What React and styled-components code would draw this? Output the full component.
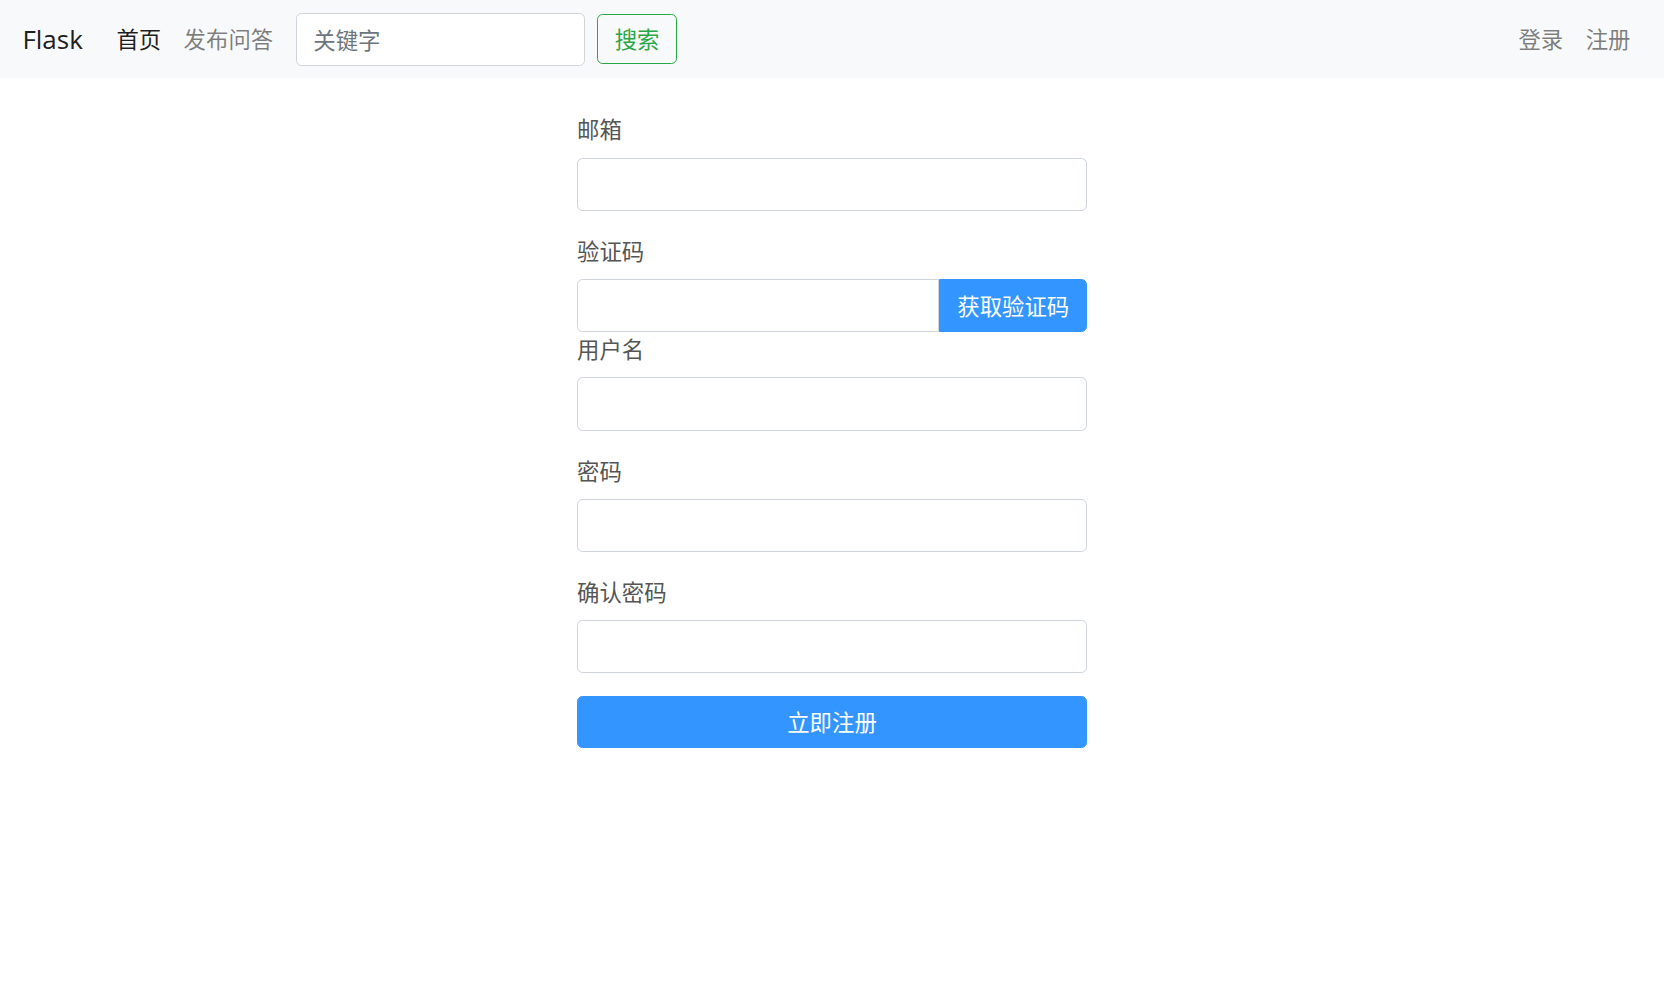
import React, { useState } from "react";
import styled, { createGlobalStyle } from "styled-components";

const GlobalStyle = createGlobalStyle`
  html, body {
    margin: 0;
    padding: 0;
    background: #fff;
  }
  body {
    font-family: "Segoe UI", "Noto Sans", "Noto Sans CJK SC", sans-serif;
    font-size: 22.4px;
    line-height: 1.5;
    color: #212529;
  }
  * {
    box-sizing: border-box;
  }
`;

const Page = styled.div`
  margin-right: 3px;
`;

const Navbar = styled.nav`
  display: flex;
  align-items: center;
  height: 78.4px;
  padding: 11.2px 22.4px;
  background: #f8f9fa;
`;

const Brand = styled.a`
  font-size: 26px;
  line-height: 42px;
  padding: 7px 0;
  margin-right: 22.4px;
  color: rgba(0, 0, 0, 0.9);
  text-decoration: none;
  font-family: "Segoe UI", "Open Sans", sans-serif;
`;

const NavList = styled.ul`
  display: flex;
  list-style: none;
  margin: 0;
  padding: 0;
`;

const NavLink = styled.a`
  display: block;
  padding: 11.2px;
  color: ${(p) => (p.active ? "rgba(0, 0, 0, 0.9)" : "rgba(0, 0, 0, 0.5)")};
  text-decoration: none;
  font-family: "Noto Sans CJK SC", sans-serif;
  font-size: 22.4px;
  line-height: 33.6px;
`;

const SearchForm = styled.form`
  display: flex;
  align-items: center;
  margin-left: 11.2px;
  margin-right: auto;
`;

const SearchInput = styled.input`
  width: 289px;
  height: 53.2px;
  padding: 8.4px 16.8px;
  border: 1.4px solid #ced4da;
  border-radius: 5.6px;
  font-family: "Noto Sans CJK SC", sans-serif;
  font-size: 22.4px;
  color: #495057;
  background: #fff;
  margin-right: 12.8px;
  outline: none;
  &::placeholder {
    color: #6c757d;
  }
`;

const OutlineButton = styled.button`
  height: 50px;
  padding: 0 16.4px;
  border: 1.4px solid #28a745;
  border-radius: 5.6px;
  background: transparent;
  color: #28a745;
  font-family: "Noto Sans CJK SC", sans-serif;
  font-size: 22.4px;
  line-height: 33.6px;
  cursor: pointer;
`;

const Container = styled.div`
  width: 510px;
  margin: 34px auto 0;
`;

const FormGroup = styled.div`
  margin-bottom: ${(p) => (p.flush ? "0" : "23px")};
`;

const Label = styled.label`
  display: block;
  margin-bottom: 11.6px;
  color: #555;
  font-family: "Noto Sans CJK SC", sans-serif;
  font-size: 22.4px;
  line-height: 33.6px;
`;

const Input = styled.input`
  display: block;
  width: 100%;
  height: 53.2px;
  padding: 8.4px 16.8px;
  border: 1.4px solid #ced4da;
  border-radius: 5.6px;
  font-size: 22.4px;
  color: #495057;
  background: #fff;
  outline: none;
`;

const InputGroup = styled.div`
  display: flex;
  align-items: stretch;
  ${Input} {
    flex: 1;
    width: auto;
    border-top-right-radius: 0;
    border-bottom-right-radius: 0;
  }
`;

const PrimaryButton = styled.button`
  display: block;
  width: ${(p) => (p.block ? "100%" : "auto")};
  height: ${(p) => (p.block ? "52px" : "53.2px")};
  margin-top: ${(p) => (p.block ? "1.5px" : "0")};
  padding: 0 16.8px;
  border: 1.4px solid #3395ff;
  border-radius: ${(p) => (p.attached ? "0 5.6px 5.6px 0" : "5.6px")};
  background: #3395ff;
  color: #fff;
  font-family: "Noto Sans CJK SC", sans-serif;
  font-size: 22.4px;
  line-height: 33.6px;
  cursor: pointer;
`;

const fields = [
  { name: "username", label: "用户名", type: "text" },
  { name: "password", label: "密码", type: "password" },
  { name: "password_confirm", label: "确认密码", type: "password" },
];

const App = () => {
  const [form, setForm] = useState({
    email: "",
    captcha: "",
    username: "",
    password: "",
    password_confirm: "",
  });

  const handleChange = (e) => {
    setForm({ ...form, [e.target.name]: e.target.value });
  };

  return (
    <Page>
      <GlobalStyle />
      <Navbar>
        <Brand href="#">Flask</Brand>
        <NavList>
          <li>
            <NavLink href="#" active>首页</NavLink>
          </li>
          <li>
            <NavLink href="#">发布问答</NavLink>
          </li>
        </NavList>
        <SearchForm onSubmit={(e) => e.preventDefault()}>
          <SearchInput type="search" placeholder="关键字" />
          <OutlineButton type="submit">搜索</OutlineButton>
        </SearchForm>
        <NavList>
          <li>
            <NavLink href="#">登录</NavLink>
          </li>
          <li>
            <NavLink href="#">注册</NavLink>
          </li>
        </NavList>
      </Navbar>

      <Container>
        <form onSubmit={(e) => e.preventDefault()}>
          <FormGroup>
            <Label htmlFor="email">邮箱</Label>
            <Input
              type="email"
              id="email"
              name="email"
              value={form.email}
              onChange={handleChange}
            />
          </FormGroup>
          <FormGroup flush>
            <Label htmlFor="captcha">验证码</Label>
            <InputGroup>
              <Input
                type="text"
                id="captcha"
                name="captcha"
                value={form.captcha}
                onChange={handleChange}
              />
              <PrimaryButton type="button" attached>
                获取验证码
              </PrimaryButton>
            </InputGroup>
          </FormGroup>
          {fields.map((f) => (
            <FormGroup key={f.name}>
              <Label htmlFor={f.name}>{f.label}</Label>
              <Input
                type={f.type}
                id={f.name}
                name={f.name}
                value={form[f.name]}
                onChange={handleChange}
              />
            </FormGroup>
          ))}
          <PrimaryButton type="submit" block>
            立即注册
          </PrimaryButton>
        </form>
      </Container>
    </Page>
  );
};

export default App;
